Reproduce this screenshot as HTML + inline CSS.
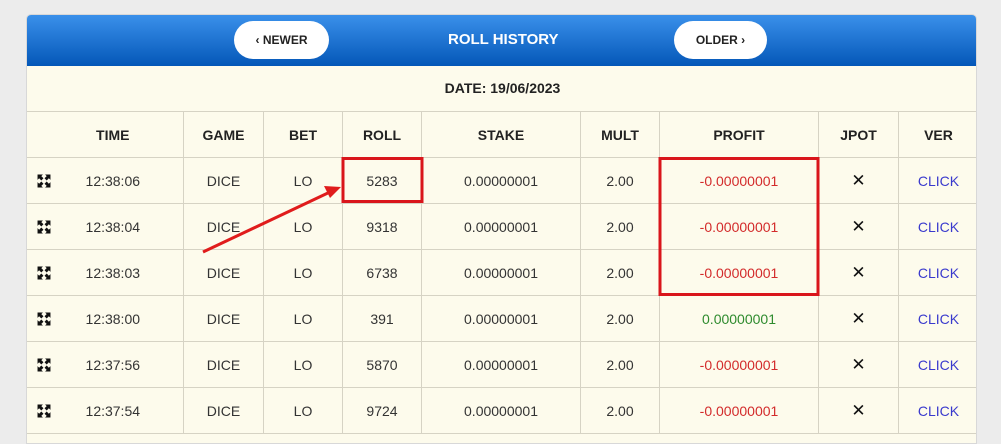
<!DOCTYPE html>
<html><head><style>
body{margin:0;width:1001px;height:435px;background:#ececec;overflow:hidden;font-family:"Liberation Sans",sans-serif;position:relative}
.panel{position:absolute;left:26px;top:14px;width:951px;height:430px;background:#fdfbec;border-radius:5px 5px 0 0;border:1px solid #d8d8d8;box-sizing:border-box;overflow:hidden}
.hdr{position:absolute;left:0;top:0;width:951px;height:51px;background:linear-gradient(#3a90ea,#0457b8)}
.btn{position:absolute;top:6px;height:38px;background:#fff;border-radius:19px;font-weight:bold;font-size:12px;color:#222;text-align:center;line-height:38px}
.title{position:absolute;left:421px;top:16px;color:#fff;font-weight:bold;font-size:15px}
.date{position:absolute;left:0;top:51px;width:951px;height:45px;line-height:45px;text-align:center;font-weight:bold;font-size:14px;color:#222;border-bottom:1px solid #d6d3c4}
table{position:absolute;left:-1px;top:96px;border-collapse:collapse;font-size:14px;color:#333;table-layout:fixed;width:952px}
td{height:45px;border:1px solid #d6d3c4;text-align:center;padding:0}
th{height:45px;border:1px solid #d6d3c4;font-size:14px;color:#222;padding:0}
.r{color:#d32b2b}.g{color:#2e8b2e}.c{color:#3a3acd}
.ic{position:absolute;left:10px;top:16px}
td:first-child{position:relative}
.x{font-size:17px;color:#111}
</style></head><body>
<div class="panel">
<div class="hdr">
<div class="btn" style="left:207px;width:95px">&#8249; NEWER</div>
<div class="title">ROLL HISTORY</div>
<div class="btn" style="left:647px;width:93px">OLDER &#8250;</div>
</div>
<div class="date">DATE: 19/06/2023</div>
<table>
<colgroup><col style="width:157px"><col style="width:80px"><col style="width:79px"><col style="width:79px"><col style="width:159px"><col style="width:79px"><col style="width:159px"><col style="width:80px"><col style="width:80px"></colgroup>
<tr><th>&nbsp;&nbsp;&nbsp;&nbsp;TIME</th><th>GAME</th><th>BET</th><th>ROLL</th><th>STAKE</th><th>MULT</th><th>PROFIT</th><th>JPOT</th><th>VER</th></tr>
<tr><td><svg class="ic" width="14" height="14" viewBox="0 0 13 13"><path d="M0.5 0.5h5L4 2l2 2-2 2-2-2-1.5 1.5zM12.5 0.5v5L11 4 9 6 7 4l2-2-1.5-1.5zM12.5 12.5h-5L9 11 7 9l2-2 2 2 1.5-1.5zM0.5 12.5v-5L2 9l2-2 2 2-2 2 1.5 1.5z" fill="#111"/></svg>&nbsp;&nbsp;&nbsp;&nbsp;12:38:06</td><td>DICE</td><td>LO</td><td>5283</td><td>0.00000001</td><td>2.00</td><td class="r">-0.00000001</td><td class="x">✕</td><td class="c">CLICK</td></tr>
<tr><td><svg class="ic" width="14" height="14" viewBox="0 0 13 13"><path d="M0.5 0.5h5L4 2l2 2-2 2-2-2-1.5 1.5zM12.5 0.5v5L11 4 9 6 7 4l2-2-1.5-1.5zM12.5 12.5h-5L9 11 7 9l2-2 2 2 1.5-1.5zM0.5 12.5v-5L2 9l2-2 2 2-2 2 1.5 1.5z" fill="#111"/></svg>&nbsp;&nbsp;&nbsp;&nbsp;12:38:04</td><td>DICE</td><td>LO</td><td>9318</td><td>0.00000001</td><td>2.00</td><td class="r">-0.00000001</td><td class="x">✕</td><td class="c">CLICK</td></tr>
<tr><td><svg class="ic" width="14" height="14" viewBox="0 0 13 13"><path d="M0.5 0.5h5L4 2l2 2-2 2-2-2-1.5 1.5zM12.5 0.5v5L11 4 9 6 7 4l2-2-1.5-1.5zM12.5 12.5h-5L9 11 7 9l2-2 2 2 1.5-1.5zM0.5 12.5v-5L2 9l2-2 2 2-2 2 1.5 1.5z" fill="#111"/></svg>&nbsp;&nbsp;&nbsp;&nbsp;12:38:03</td><td>DICE</td><td>LO</td><td>6738</td><td>0.00000001</td><td>2.00</td><td class="r">-0.00000001</td><td class="x">✕</td><td class="c">CLICK</td></tr>
<tr><td><svg class="ic" width="14" height="14" viewBox="0 0 13 13"><path d="M0.5 0.5h5L4 2l2 2-2 2-2-2-1.5 1.5zM12.5 0.5v5L11 4 9 6 7 4l2-2-1.5-1.5zM12.5 12.5h-5L9 11 7 9l2-2 2 2 1.5-1.5zM0.5 12.5v-5L2 9l2-2 2 2-2 2 1.5 1.5z" fill="#111"/></svg>&nbsp;&nbsp;&nbsp;&nbsp;12:38:00</td><td>DICE</td><td>LO</td><td>391</td><td>0.00000001</td><td>2.00</td><td class="g">0.00000001</td><td class="x">✕</td><td class="c">CLICK</td></tr>
<tr><td><svg class="ic" width="14" height="14" viewBox="0 0 13 13"><path d="M0.5 0.5h5L4 2l2 2-2 2-2-2-1.5 1.5zM12.5 0.5v5L11 4 9 6 7 4l2-2-1.5-1.5zM12.5 12.5h-5L9 11 7 9l2-2 2 2 1.5-1.5zM0.5 12.5v-5L2 9l2-2 2 2-2 2 1.5 1.5z" fill="#111"/></svg>&nbsp;&nbsp;&nbsp;&nbsp;12:37:56</td><td>DICE</td><td>LO</td><td>5870</td><td>0.00000001</td><td>2.00</td><td class="r">-0.00000001</td><td class="x">✕</td><td class="c">CLICK</td></tr>
<tr><td><svg class="ic" width="14" height="14" viewBox="0 0 13 13"><path d="M0.5 0.5h5L4 2l2 2-2 2-2-2-1.5 1.5zM12.5 0.5v5L11 4 9 6 7 4l2-2-1.5-1.5zM12.5 12.5h-5L9 11 7 9l2-2 2 2 1.5-1.5zM0.5 12.5v-5L2 9l2-2 2 2-2 2 1.5 1.5z" fill="#111"/></svg>&nbsp;&nbsp;&nbsp;&nbsp;12:37:54</td><td>DICE</td><td>LO</td><td>9724</td><td>0.00000001</td><td>2.00</td><td class="r">-0.00000001</td><td class="x">✕</td><td class="c">CLICK</td></tr>
</table>
</div>
<svg style="position:absolute;left:0;top:0" width="1001" height="435">
<rect x="343" y="158.5" width="79" height="43" fill="none" stroke="#d9151b" stroke-width="3"/>
<rect x="660" y="158.5" width="158" height="136" fill="none" stroke="#d9151b" stroke-width="3"/>
<line x1="203" y1="252" x2="330" y2="192" stroke="#e01c1c" stroke-width="3"/>
<polygon points="341,187 324,186 330,198" fill="#e01c1c"/>
</svg>
</body></html>
